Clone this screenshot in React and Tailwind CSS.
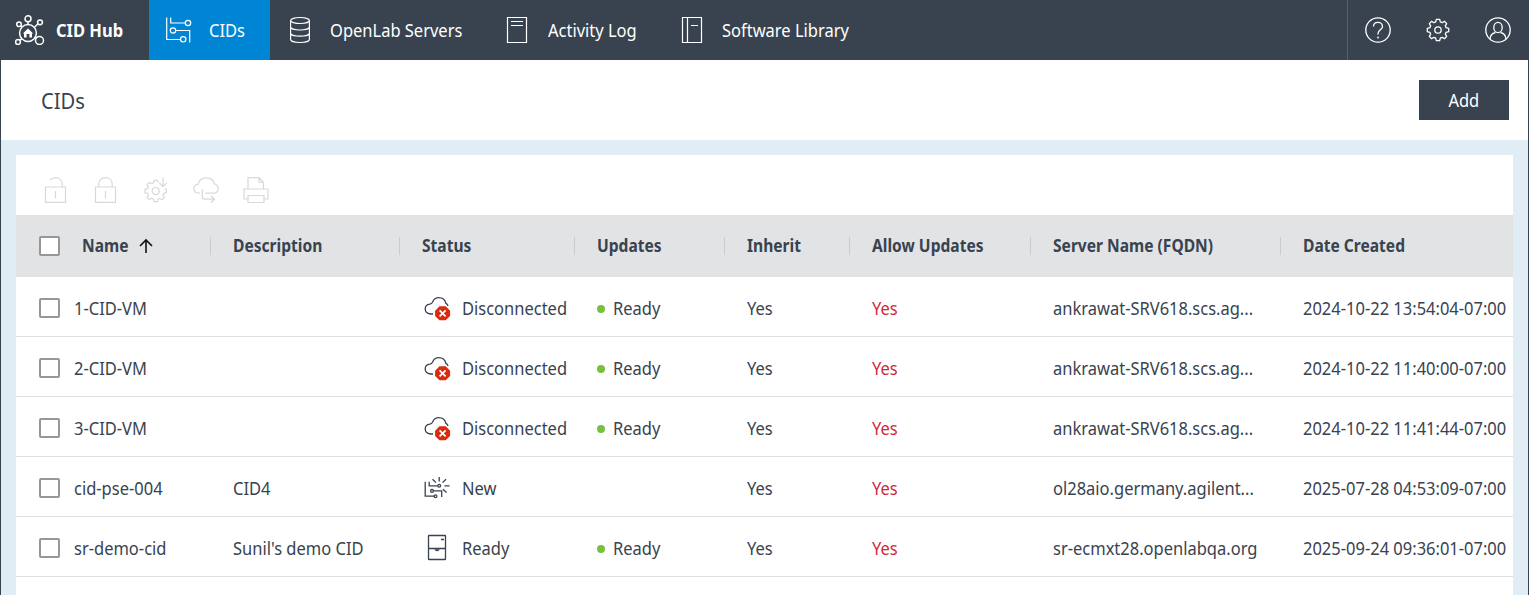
const rows = [
  { name: "1-CID-VM", desc: "", status: "Disconnected", updates: "Ready", server: "ankrawat-SRV618.scs.ag...", date: "2024-10-22 13:54:04-07:00" },
  { name: "2-CID-VM", desc: "", status: "Disconnected", updates: "Ready", server: "ankrawat-SRV618.scs.ag...", date: "2024-10-22 11:40:00-07:00" },
  { name: "3-CID-VM", desc: "", status: "Disconnected", updates: "Ready", server: "ankrawat-SRV618.scs.ag...", date: "2024-10-22 11:41:44-07:00" },
  { name: "cid-pse-004", desc: "CID4", status: "New", updates: "", server: "ol28aio.germany.agilent...", date: "2025-07-28 04:53:09-07:00" },
  { name: "sr-demo-cid", desc: "Sunil's demo CID", status: "Ready", updates: "Ready", server: "sr-ecmxt28.openlabqa.org", date: "2025-09-24 09:36:01-07:00" },
];

const GRID = "grid grid-cols-[195px_189px_175px_150px_125px_181px_250px_232px]";

// Condensed label: Noto Sans narrowed horizontally.
function T({ children, className = "origin-left" }) {
  return <span className={`inline-block scale-x-[.916] whitespace-nowrap ${className}`}>{children}</span>;
}

function Icon({ size = 30, sw = 1.2, className = "", children }) {
  return (
    <svg width={size} height={size} viewBox={`0 0 ${size} ${size}`} fill="none" stroke="currentColor" strokeWidth={sw} className={`shrink-0 ${className}`}>
      {children}
    </svg>
  );
}

const HubIcon = () => (
  <Icon sw={1.5}>
    <circle cx="13" cy="18" r="8.4" />
    <circle cx="13" cy="3.800" r="3" />
    <circle cx="4" cy="9.300" r="2.300" />
    <circle cx="25" cy="7.300" r="2.400" />
    <circle cx="3" cy="27" r="2.400" />
    <circle cx="24.500" cy="25.500" r="4" />
    <path d="M13 7v2.600M6 10.800l1.300 1.200M23 8.800l-3.300 3.200M5 25.400l2.200-2M19.200 22.200l2 1.300" />
    <path d="M7.800 18.500l5.200-5 5.200 5h-1.200v4h-2.600v-3.500h-2.800v3.500H9v-4z" fill="currentColor" stroke="none" />
  </Icon>
);

const CidsIcon = () => (
  <Icon>
    <path d="M2.700 2.500v22h14M6.700 2.500v5.500h14.500M11.700 15.500h14v12" />
    <circle cx="24" cy="8" r="2.700" />
    <circle cx="9" cy="15.500" r="2.700" />
    <circle cx="19.200" cy="24.300" r="2.700" />
  </Icon>
);

const DbIcon = () => (
  <Icon>
    <ellipse cx="15" cy="5.500" rx="9.400" ry="3" />
    <path d="M5.600 5.500v19c0 1.700 4.200 3 9.400 3s9.400-1.300 9.400-3v-19M5.600 12c0 1.700 4.200 3 9.400 3s9.400-1.300 9.400-3M5.600 18.200c0 1.700 4.200 3 9.400 3s9.400-1.300 9.400-3" />
  </Icon>
);

const LogIcon = () => (
  <Icon>
    <path d="M5.500 2.500h19v25h-19zM9 6.500h12M9 10.500h12" />
  </Icon>
);

const BookIcon = () => (
  <Icon>
    <path d="M5.500 2.500h19v25h-19zM10.500 2.500v25M14 10.500h7" />
  </Icon>
);

const HelpIcon = () => (
  <Icon sw={1.3}>
    <circle cx="15" cy="15" r="12.200" />
    <path d="M10.500 11.500c0-2.500 2-4.100 4.500-4.100s4.500 1.700 4.500 4c0 3.300-4.500 3.600-4.500 7.200v1" />
    <circle cx="15" cy="22.500" r=".9" fill="currentColor" stroke="none" />
  </Icon>
);

const GEAR = "M12.700 6.900 13.300 4.300h3.400l.6 2.600 1.900.8 2.200-1.400 2.300 2.300-1.400 2.200.8 1.900 2.600.6v3.400l-2.600.6-.8 1.900 1.400 2.200-2.300 2.300-2.200-1.400-1.900.8-.6 2.600h-3.400l-.6-2.600-1.900-.8-2.200 1.400-2.300-2.300 1.400-2.200-.8-1.900-2.600-.6v-3.400l2.600-.6.8-1.900-1.400-2.200 2.300-2.300 2.200 1.400z";

const GearIcon = () => (
  <Icon sw={1.3}>
    <path d={GEAR} strokeLinejoin="round" />
    <circle cx="15" cy="15" r="3.200" />
  </Icon>
);

const UserIcon = () => (
  <Icon sw={1.3}>
    <circle cx="15" cy="15" r="12.200" />
    <ellipse cx="15" cy="12.500" rx="4.200" ry="5.200" />
    <path d="M7 24.200c.2-4 2-5.900 5.500-6.700M23 24.200c-.2-4-2-5.900-5.500-6.700" />
  </Icon>
);

const UnlockIcon = () => (
  <Icon>
    <path d="M5.500 12h20v15.300h-20zM15.500 16v7.500M10 5.200C11.300 3.600 13.200 2.700 15.500 2.700c4 0 6.700 2.500 6.700 6.300v3" />
  </Icon>
);
const LockIcon = () => (
  <Icon>
    <path d="M5.500 12h20v15.300h-20zM15.500 16v7.500M8.800 12V9c0-3.800 2.700-6.300 6.700-6.300s6.700 2.500 6.700 6.300v3" />
  </Icon>
);
const GearDownIcon = () => (
  <Icon>
    <path d="M18 7.700 17.400 5.300H14l-.6 2.600-1.900.8-2.200-1.400L7 9.600l1.400 2.200-.8 1.900-2.600.6v3.400l2.600.6.8 1.900L7 22.400l2.300 2.300 2.200-1.400 1.900.8.6 2.600h3.400l.6-2.600 1.900-.8 2.200 1.400 2.300-2.300-1.400-2.200.8-1.900 2.600-.6v-3.400l-2-.4" strokeLinejoin="round" />
    <circle cx="15.700" cy="16" r="3.500" />
    <path d="M23 2.500v9M19.300 8l3.700 3.600L26.700 8" />
  </Icon>
);
const CloudSyncIcon = () => (
  <Icon>
    <g transform="translate(1.300 0)">
      <path d="M8.500 18.200H7.200C4.400 18 2.500 16 2.500 13.600c0-2.500 2-4.300 4.500-4.500C7.700 5.300 10.700 2.800 15 2.800c4.300 0 7.200 2.300 8 6 2.300.6 4 2.500 4 4.800 0 2.500-1.800 4.400-4.500 4.600H14" />
      <path d="M11 14v7.500c0 2 .8 2.700 2.500 2.700h9.500M19.500 20.700l3.700 3.500-3.700 3.500" />
    </g>
  </Icon>
);
const PrintIcon = () => (
  <Icon>
    <g transform="translate(.5 0)">
      <path d="M7.500 13.500V2.700h11l4.500 4.500v6.300M18.500 2.700v4.500H23M7 24H3.500V14H27.500V24H24M7.500 20.500h16v7h-16z" />
    </g>
  </Icon>
);

const CloudErrorIcon = () => (
  <Icon sw={1.3}>
    <path d="M10 21H7.500C4.600 20.700 2.200 18.800 2.200 16.100c0-2.600 2-4.600 4.600-4.900C8.200 11 9 10.400 9.500 9.300 10.500 6.700 12.800 4.700 15.800 4.700c3.800 0 6.300 2.300 7.100 5.700 1 .4 1.700 1.300 2.200 2.500" />
    <path d="M16.500 13.300h6.200l4.400 4.400v5.200l-4.400 4.400h-6.200l-4.400-4.400v-5.200z" fill="#dc2a0f" stroke="none" />
    <path d="M16.600 17.300l6 6M22.600 17.300l-6 6" stroke="#fff" strokeWidth="1.700" />
  </Icon>
);
const NewIcon = () => (
  <Icon sw={1.300}>
    <g transform="translate(0 1.700)">
      <path d="M2.200 7v14.500h9.500M6.200 7v4.200h8.600M10.700 16.200h8v6" />
      <circle cx="16.200" cy="11" r="1.400" />
      <circle cx="9" cy="16.200" r="1.400" />
      <circle cx="12.500" cy="21.500" r="1.400" />
      <path d="M16.200 2.200v4.500M9.500 4.500l3.500 3.400M23 4.500l-3.500 3.400M21.500 11.200h5M20 14.500l3.500 3.300" />
    </g>
  </Icon>
);
const ReadyIcon = () => (
  <Icon sw={1.300}>
    <rect x="5.500" y="2.500" width="17" height="24" rx=".6" />
    <path d="M5.500 15.500h17M18 6.500h3" />
    <path d="M11.500 16.300h5.200c-.4 1.300-1.200 2-2.600 2s-2.200-.7-2.600-2z" fill="currentColor" stroke="none" />
  </Icon>
);

const statusIcons = { Disconnected: CloudErrorIcon, New: NewIcon, Ready: ReadyIcon };

function Checkbox() {
  return <span className="block h-5 w-[21px] shrink-0 rounded-[2px] border-2 border-[#979797] bg-white" />;
}

function HeaderCell({ children }) {
  return (
    <div className="flex min-w-0 items-center pl-[22px]">
      <div className="min-w-0 flex-1">
        <T>{children}</T>
      </div>
      <span className="h-[18px] w-px shrink-0 bg-[#c9ccd0]" />
    </div>
  );
}

export default function App() {
  return (
    <div className="flex h-[595px] w-[1529px] flex-col overflow-hidden border-x border-[#38434f] bg-[#e0edf5] font-['Noto_Sans',sans-serif] text-[18px] leading-6 text-[#38434f]">
      <nav className="flex h-[60px] shrink-0 items-stretch bg-[#38434f] text-white">
        <div className="flex w-[148px] items-center pl-[14px]">
          <HubIcon />
          <span className="pl-[11px] font-bold"><T>CID Hub</T></span>
        </div>
        <div className="flex w-[121px] items-center bg-[#0085d5] pl-[15px]">
          <CidsIcon />
          <span className="pl-[15px]"><T>CIDs</T></span>
        </div>
        <div className="flex w-[217px] items-center pl-[15px]">
          <DbIcon />
          <span className="pl-[15px]"><T>OpenLab Servers</T></span>
        </div>
        <div className="flex w-[175px] items-center pl-[15px]">
          <LogIcon />
          <span className="pl-[15.500px]"><T>Activity Log</T></span>
        </div>
        <div className="flex items-center pl-[15px]">
          <BookIcon />
          <span className="pl-[14.500px]"><T>Software Library</T></span>
        </div>
        <div className="ml-auto flex w-[181px] items-center gap-[30px] border-l border-[#56606a] pl-[15px]">
          <HelpIcon />
          <GearIcon />
          <UserIcon />
        </div>
      </nav>

      <header className="flex h-20 shrink-0 items-center justify-between bg-white pr-[19px] pl-10">
        <h1 className="text-[22px]"><T>CIDs</T></h1>
        <button className="h-10 w-[90px] bg-[#38434f] text-white"><T className="origin-center">Add</T></button>
      </header>

      <main className="mx-[15px] mt-[15px] flex-1 bg-white">
        <div className="flex h-[60px] items-center gap-5 pt-[10px] pl-6 text-[#d5d9dc]">
          <UnlockIcon />
          <LockIcon />
          <GearDownIcon />
          <CloudSyncIcon />
          <PrintIcon />
        </div>
        <div className={`${GRID} h-[62px] bg-[#e1e3e5] text-[17px] font-bold`}>
          <div className="flex items-center pl-[23px]">
            <Checkbox />
            <span className="w-[79px] pl-[22px]"><T>Name</T></span>
            <svg width="16" height="16" viewBox="0 0 16 16" fill="none" stroke="#111" strokeWidth="1.600" className="-ml-px">
              <path d="M8 15V2M2 8l6-6 6 6" />
            </svg>
            <span className="ml-auto h-[18px] w-px bg-[#c9ccd0]" />
          </div>
          <HeaderCell>Description</HeaderCell>
          <HeaderCell>Status</HeaderCell>
          <HeaderCell>Updates</HeaderCell>
          <HeaderCell>Inherit</HeaderCell>
          <HeaderCell>Allow Updates</HeaderCell>
          <HeaderCell>Server Name (FQDN)</HeaderCell>
          <div className="flex items-center pl-[22px]"><T>Date Created</T></div>
        </div>
        {rows.map((r) => {
          const StatusIcon = statusIcons[r.status];
          return (
            <div key={r.name} className={`${GRID} h-[60px] items-center border-b border-[#dcdfe3] pt-[3px]`}>
              <div className="flex items-center pl-[23px]">
                <Checkbox />
                <span className="pl-[14px]"><T>{r.name}</T></span>
              </div>
              <div className="pl-[22px]"><T>{r.desc}</T></div>
              <div className="flex items-center pl-[23px]">
                <StatusIcon />
                <span className="w-0 pl-[9px]"><T>{r.status}</T></span>
              </div>
              <div className="flex items-center pl-[22px]">
                {r.updates && (
                  <>
                    <span className="mt-[2px] size-2 rounded-full bg-[#76c03c]" />
                    <span className="pl-2"><T>{r.updates}</T></span>
                  </>
                )}
              </div>
              <div className="pl-[22px]"><T>Yes</T></div>
              <div className="pl-[22px] text-[#d1293d]"><T>Yes</T></div>
              <div className="pl-[22px]"><T>{r.server}</T></div>
              <div className="w-0 pl-[22px]"><T>{r.date}</T></div>
            </div>
          );
        })}
      </main>
    </div>
  );
}
